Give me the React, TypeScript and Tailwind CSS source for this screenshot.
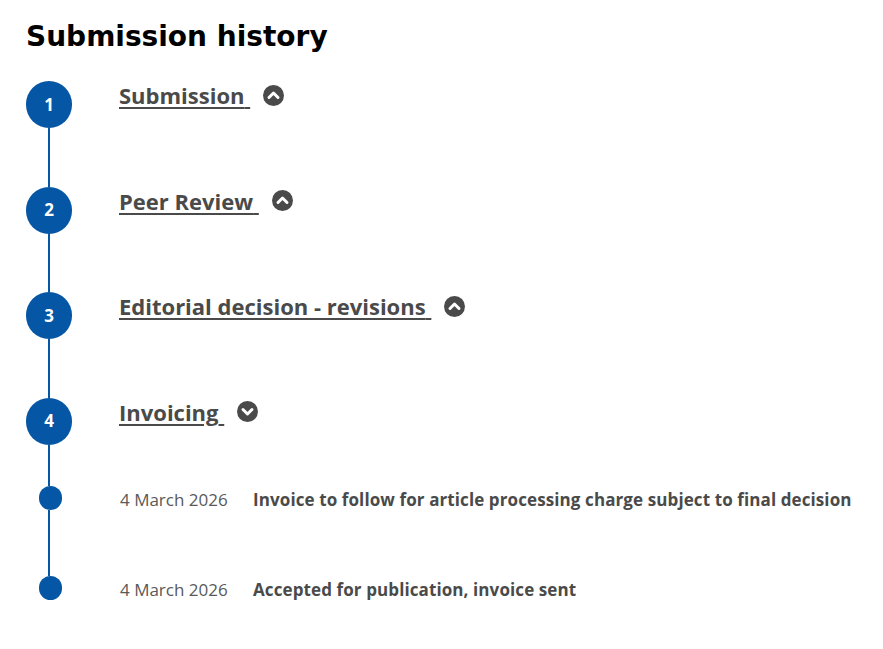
import React from 'react';

const BLUE = 'bg-[#0556a5]';

const steps = [
  { n: 1, title: 'Submission', open: true },
  { n: 2, title: 'Peer Review', open: true },
  { n: 3, title: 'Editorial decision - revisions', open: true },
  { n: 4, title: 'Invoicing', open: false },
];

const events = [
  { date: '4 March 2026', text: 'Invoice to follow for article processing charge subject to final decision' },
  { date: '4 March 2026', text: 'Accepted for publication, invoice sent' },
];

function ChevronCircle({ up }: { up: boolean }) {
  return (
    <svg width="21" height="21" viewBox="0 0 21 21" className="shrink-0">
      <circle cx="10.5" cy="10.5" r="10.5" fill="#4a4a4a" />
      <path
        d={up ? 'M6 12.5 L10.5 8 L15 12.5' : 'M6 8.5 L10.5 13 L15 8.5'}
        fill="none"
        stroke="white"
        strokeWidth={3}
        strokeLinecap="round"
        strokeLinejoin="round"
      />
    </svg>
  );
}

export default function App() {
  return (
    <div className="min-h-screen bg-white pl-[26px] pt-5 font-['Open_Sans',sans-serif]">
      <h2 className="font-['DejaVu_Sans',sans-serif] text-[28px] font-bold leading-[34px] text-black">
        Submission history
      </h2>

      <ol className="mt-[27px]">
        {steps.map((s, i) => (
          <li key={s.n} className={`flex ${i === steps.length - 1 ? 'h-[88.5px]' : 'h-[105.5px]'}`}>
            <div className="flex w-[46px] flex-col items-center">
              <div
                className={`flex h-[47px] w-[46px] shrink-0 items-center justify-center rounded-full ${BLUE} text-[17px] font-bold text-white`}
              >
                {s.n}
              </div>
              <div className={`w-[2px] flex-1 ${BLUE}`} />
            </div>
            <div className="ml-[47px] -mt-px flex h-[30px] items-center">
              <a
                href="#"
                className="text-[22px] font-bold leading-[30px] text-[#4a4a4a] underline decoration-2 underline-offset-[3px]"
              >
                {s.title}
                {'\u00a0'}
              </a>
              <span className="ml-[13px] flex">
                <ChevronCircle up={s.open} />
              </span>
            </div>
          </li>
        ))}

        {events.map((e, i) => {
          const last = i === events.length - 1;
          return (
            <li key={i} className={`flex ${last ? 'h-[24px]' : 'h-[90px]'}`}>
              <div className="flex w-[46px] flex-col items-center">
                <div className={`ml-[2px] h-[24px] w-[23px] shrink-0 rounded-full ${BLUE}`} />
                {!last && <div className={`w-[2px] flex-1 ${BLUE}`} />}
              </div>
              <div className="ml-[48px] flex h-[24px] items-center pt-[3px] text-[17px] whitespace-nowrap">
                <span className="w-[133px] text-[#595959]">{e.date}</span>
                <span className="font-bold tracking-[0.1px] text-[#4a4a4a]">{e.text}</span>
              </div>
            </li>
          );
        })}
      </ol>
    </div>
  );
}
